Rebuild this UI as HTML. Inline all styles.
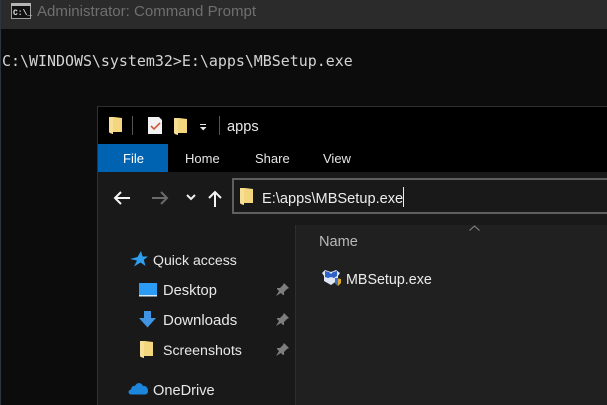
<!DOCTYPE html>
<html>
<head>
<meta charset="utf-8">
<style>
html,body{margin:0;padding:0;width:607px;height:405px;overflow:hidden;background:#0c0c0c}
body{position:relative;font-family:"Liberation Sans",sans-serif;color:#e8e8e8}
.a{position:absolute;white-space:nowrap;line-height:1}
svg{position:absolute;overflow:visible}
</style>
</head>
<body>
<div class="a" style="left:0;top:0;width:607px;height:29px;background:#2b2b2b"></div>
<div class="a" style="left:0;top:0;width:1px;height:405px;background:#2c3440"></div>
<svg style="left:11px;top:3px" width="20" height="16" viewBox="0 0 20 16">
<rect x="0.5" y="0.5" width="19" height="15" fill="#111" stroke="#a0a0a0"/>
<rect x="0" y="0" width="20" height="3" fill="#b5b5b5"/>
<text x="2" y="12" font-family="Liberation Mono,monospace" font-size="8" font-weight="bold" fill="#e2e2e2">C:\_</text>
</svg>
<div class="a" style="left:37px;top:4px;font-size:15.05px;color:#6f6f6f">Administrator: Command Prompt</div>
<div class="a" style="left:2px;top:54px;font-family:'DejaVu Sans Mono',monospace;font-size:14.95px;color:#d4d4d4">C:\WINDOWS\system32&gt;E:\apps\MBSetup.exe</div>

<!-- explorer -->
<div class="a" style="left:97px;top:106px;width:510px;height:299px;background:#191919"></div>
<div class="a" style="left:97px;top:106px;width:510px;height:1px;background:#2e2e2e"></div>
<div class="a" style="left:97px;top:106px;width:1px;height:299px;background:#333"></div>
<div class="a" style="left:98px;top:107px;width:509px;height:65px;background:#000"></div>
<div class="a" style="left:98px;top:144px;width:70px;height:28px;background:#0063b1"></div>

<svg style="left:109px;top:117px" width="13" height="17" viewBox="0 0 13 17"><path d="M0 0h5l8 1v14H4v2l-3-1-1-1z" fill="#f4d67f"/><path d="M0 0l4 1v16l-3-1-1-1z" fill="#f7df98"/></svg>
<div class="a" style="left:132px;top:116px;width:1px;height:19px;background:#555"></div>
<svg style="left:148px;top:116px" width="15" height="18" viewBox="0 0 15 18"><path d="M0 1h11l3 3v14H0z" fill="#f2f2f2"/><path d="M3 10l3 3 6-6" fill="none" stroke="#d0583a" stroke-width="1.600"/></svg>
<svg style="left:174px;top:118px" width="13" height="17" viewBox="0 0 13 17"><path d="M0 0h5l8 1v14H4v2l-3-1-1-1z" fill="#f4d67f"/><path d="M0 0l4 1v16l-3-1-1-1z" fill="#f7df98"/></svg>
<svg style="left:199px;top:124px" width="9" height="7" viewBox="0 0 9 7"><path d="M1 .5h6" stroke="#e8e8e8" fill="none"/><path d="M1 3h6.500L4.200 6.500z" fill="#e8e8e8"/></svg>
<div class="a" style="left:219px;top:116px;width:1px;height:19px;background:#555"></div>
<div class="a" style="left:227px;top:120px;font-size:14.6px;color:#e8e8e8">apps</div>

<div class="a" style="left:123px;top:152px;font-size:13px;color:#fff">File</div>
<div class="a" style="left:185px;top:152px;font-size:13px;color:#e6e6e6">Home</div>
<div class="a" style="left:255px;top:152px;font-size:13px;color:#e6e6e6">Share</div>
<div class="a" style="left:323px;top:152px;font-size:13px;color:#e6e6e6">View</div>

<!-- nav bar -->
<div class="a" style="left:98px;top:172px;width:509px;height:53px;background:#191919"></div>
<svg style="left:113px;top:190px" width="18" height="16" viewBox="0 0 18 16"><path d="M17 8H2M8 2L2 8l6 6" fill="none" stroke="#f4f4f4" stroke-width="2"/></svg>
<svg style="left:151px;top:190px" width="18" height="16" viewBox="0 0 18 16"><path d="M1 8h15M10 2l6 6-6 6" fill="none" stroke="#6a6a6a" stroke-width="2"/></svg>
<svg style="left:186px;top:194px" width="10" height="7" viewBox="0 0 10 7"><path d="M1 1l4 4 4-4" fill="none" stroke="#eee" stroke-width="2"/></svg>
<svg style="left:208px;top:190px" width="14" height="18" viewBox="0 0 14 18"><path d="M7 17V2M1 8l6-6 6 6" fill="none" stroke="#f4f4f4" stroke-width="2"/></svg>

<div class="a" style="left:232px;top:178px;width:375px;height:36px;box-sizing:border-box;border:2px solid #5f5f5f;border-right:0;background:#191919"></div>
<svg style="left:240px;top:188px" width="13" height="17" viewBox="0 0 13 17"><path d="M0 0h5l8 1v14H4v2l-3-1-1-1z" fill="#f4d67f"/><path d="M0 0l4 1v16l-3-1-1-1z" fill="#f7df98"/></svg>
<div class="a" style="left:262px;top:192px;font-size:14.6px;color:#ededed">E:\apps\MBSetup.exe</div>
<div class="a" style="left:403px;top:187px;width:1px;height:20px;background:#eee"></div>

<!-- nav pane -->
<div class="a" style="left:295px;top:225px;width:1px;height:180px;background:#2e2e2e"></div>
<div class="a" style="left:296px;top:225px;width:311px;height:180px;background:#202020"></div>
<svg style="left:469px;top:225px" width="11" height="6" viewBox="0 0 11 6"><path d="M.5 5.500l5-4.500 5 4.500" fill="none" stroke="#8a8a8a"/></svg>
<div class="a" style="left:319px;top:235px;font-size:14.6px;color:#b8b8b8">Name</div>

<svg style="left:321px;top:268px" width="21" height="19" viewBox="0 0 21 19">
<path d="M1 5l3-3 6 2 5-2 4 3-2 3v4l-7 5-7-4V8z" fill="#dfe6f2"/>
<path d="M4 9V3l4 1 2 2 2-2 4-1v5l-3 2-3-1-3 1z" fill="#2f62c9"/>
<path d="M14 10l6 1v4l-3 3-3-3z" fill="#e2a82a"/>
<path d="M14 10h3v8l-3-3z" fill="#3b6fd0"/>
</svg>
<div class="a" style="left:346px;top:273px;font-size:14.300px;color:#ececec">MBSetup.exe</div>

<svg style="left:130px;top:251px" width="18" height="17" viewBox="0 0 18 17"><path d="M11 0l1.600 5.500H18l-4.200 3.200L15.500 15 10.500 11.500 4 15.500 7 9.500 0 8l7.500-2z" fill="#2e9fef"/></svg>
<div class="a" style="left:153px;top:253px;font-size:14.100px;color:#e8e8e8">Quick access</div>

<svg style="left:139px;top:283px" width="18" height="14" viewBox="0 0 18 14"><rect width="18" height="13" fill="#2b9bf4"/><rect x="0" y="12" width="18" height="1.500" fill="#d8ecfb"/></svg>
<div class="a" style="left:163px;top:284px;font-size:14.700px;color:#e8e8e8">Desktop</div>

<svg style="left:139px;top:311px" width="17" height="17" viewBox="0 0 17 17"><path d="M5 0h7v7h5l-8.500 9.500L0 7h5z" fill="#3f94e4"/></svg>
<div class="a" style="left:163px;top:313px;font-size:15px;color:#e8e8e8">Downloads</div>

<svg style="left:140px;top:341px" width="13" height="17" viewBox="0 0 13 17"><path d="M0 0h5l8 1v14H4v2l-3-1-1-1z" fill="#f4d67f"/><path d="M0 0l4 1v16l-3-1-1-1z" fill="#f7df98"/></svg>
<div class="a" style="left:163px;top:344px;font-size:14.200px;color:#e8e8e8">Screenshots</div>

<svg style="left:276px;top:283px" width="13" height="13" viewBox="0 0 13 13"><path d="M8 0l5 5-2 1-3 3 0 3-1 0-6-6 0-1 3 0 3-3z M3 8l-3 5 5-3z" fill="#7e7e7e"/></svg>
<svg style="left:276px;top:313px" width="13" height="13" viewBox="0 0 13 13"><path d="M8 0l5 5-2 1-3 3 0 3-1 0-6-6 0-1 3 0 3-3z M3 8l-3 5 5-3z" fill="#7e7e7e"/></svg>
<svg style="left:276px;top:343px" width="13" height="13" viewBox="0 0 13 13"><path d="M8 0l5 5-2 1-3 3 0 3-1 0-6-6 0-1 3 0 3-3z M3 8l-3 5 5-3z" fill="#7e7e7e"/></svg>

<svg style="left:128px;top:381px" width="20" height="14" viewBox="0 0 20 14"><path d="M3 13.500C0 13.500-.5 9 3 8.500 3.500 5 6 4.500 7 5 8.500 1 13.500 1 15 5c3-.5 5 2 5 5 0 2-1 3.500-3 3.500z" fill="#1b86dc"/></svg>
<div class="a" style="left:153px;top:384px;font-size:14.600px;color:#e8e8e8">OneDrive</div>
</body>
</html>
